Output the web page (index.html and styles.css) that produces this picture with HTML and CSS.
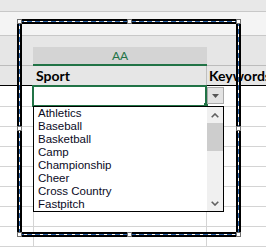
FILE: index.html
```html
<!DOCTYPE html>
<html lang="en">
  <head>
    <meta charset="UTF-8">
    <meta name="viewport" content="width=device-width, initial-scale=1.0">
    <title>Sport list</title>
    <link rel="stylesheet" href="styles.css">
  </head>
  <body>
    <div class="sheet">
      <div class="band-top"></div>
      <div class="band-bar"></div>
      <div class="col-heads">
        <div class="col-head">AA</div>
      </div>

      <div class="row row-field">
        <div class="cell cell-z"></div>
        <div class="cell cell-aa">Sport</div>
        <div class="cell cell-ab">Keywords</div>
      </div>
      <div class="row row-active">
        <div class="cell cell-z"></div>
        <div class="cell cell-aa"></div>
        <div class="cell cell-ab"></div>
      </div>
      <div class="row"><div class="cell cell-z"></div><div class="cell cell-aa"></div><div class="cell cell-ab"></div></div>
      <div class="row"><div class="cell cell-z"></div><div class="cell cell-aa"></div><div class="cell cell-ab"></div></div>
      <div class="row"><div class="cell cell-z"></div><div class="cell cell-aa"></div><div class="cell cell-ab"></div></div>
      <div class="row"><div class="cell cell-z"></div><div class="cell cell-aa"></div><div class="cell cell-ab"></div></div>
      <div class="row"><div class="cell cell-z"></div><div class="cell cell-aa"></div><div class="cell cell-ab"></div></div>
      <div class="row"><div class="cell cell-z"></div><div class="cell cell-aa"></div><div class="cell cell-ab"></div></div>
      <div class="row"><div class="cell cell-z"></div><div class="cell cell-aa"></div><div class="cell cell-ab"></div></div>

      <!-- selected cell + its dropdown -->
      <div class="selection"></div>
      <span class="fill-handle"></span>
      <button class="dd-button" type="button">
        <svg width="7" height="4" viewBox="0 0 7 4"><path d="M0 0h7L3.5 4z" fill="#555"/></svg>
      </button>
      <div class="dd-list">
        <ul class="dd-items">
          <li>Athletics</li>
          <li>Baseball</li>
          <li>Basketball</li>
          <li>Camp</li>
          <li>Championship</li>
          <li>Cheer</li>
          <li>Cross Country</li>
          <li>Fastpitch</li>
        </ul>
        <div class="dd-scroll">
          <span class="sc-arrow">
            <svg width="8" height="5" viewBox="0 0 8 5"><path d="M0.7 4.3 4 1l3.3 3.3" fill="none" stroke="#606060" stroke-width="1.6"/></svg>
          </span>
          <span class="sc-thumb"></span>
          <span class="sc-track"></span>
          <span class="sc-arrow">
            <svg width="8" height="5" viewBox="0 0 8 5"><path d="M0.7 0.7 4 4l3.3-3.3" fill="none" stroke="#606060" stroke-width="1.6"/></svg>
          </span>
        </div>
      </div>

      <!-- picture frame with its sizing handles -->
      <div class="frame"><div class="frame-mid"><div class="frame-in"></div></div></div>
      <span class="handle h-tl"></span>
      <span class="handle h-tc"></span>
      <span class="handle h-tr"></span>
      <span class="handle h-ml"></span>
      <span class="handle h-mr"></span>
      <span class="handle h-bl"></span>
      <span class="handle h-bc"></span>
      <span class="handle h-br"></span>
    </div>
  </body>
</html>
```

FILE: styles.css
```css
* {
    margin: 0;
    padding: 0;
    box-sizing: border-box;
}

body {
    background: #fff;
}

.sheet {
    position: relative;
    width: 266px;
    height: 248px;
    overflow: hidden;
    background: #fff;
    font-family: Lato, "Liberation Sans", sans-serif;
}

.band-top {
    height: 12px;
    background: #e8e8e8;
    border-bottom: 1px solid #c8c8c8;
}

.band-bar {
    height: 24px;
    background: #f4f4f4;
    border-bottom: 1px solid #c8c8c8;
}

.col-heads {
    height: 30px;
    display: flex;
    align-items: flex-end;
    background: #e6e6e6;
    border-bottom: 1px solid #bcbcbc;
}

.col-head {
    margin-left: 33px;
    margin-bottom: -1px;
    width: 174px;
    height: 19px;
    background: #d4d4d4;
    border-bottom: 2px solid #217346;
    color: #217346;
    font-size: 12px;
    line-height: 17px;
    text-align: center;
}

/* grid rows */
.row {
    display: flex;
    height: 20px;
    border-bottom: 1px solid #d4d4d4;
}

.cell-z {
    flex: none;
    width: 34px;
    border-right: 1px solid #d4d4d4;
}

.cell-aa {
    flex: none;
    width: 173px;
    border-right: 1px solid #d4d4d4;
}

.cell-ab {
    flex: 1;
    min-width: 0;
}

.row-field {
    background: #e6e6e6;
    border-bottom-color: #000;
    font-weight: 700;
    font-size: 14px;
    line-height: 19px;
    color: #000;
    white-space: nowrap;
}

.row-field .cell-z {
    border-right-color: #e6e6e6;
}

.row-field .cell-aa {
    padding-left: 2px;
    border-right-color: #bfbfbf;
}

.row-field .cell-ab {
    padding-left: 2px;
}

.row-active {
    height: 21px;
}

/* active cell */
.selection {
    position: absolute;
    left: 32px;
    top: 85px;
    width: 175px;
    height: 22px;
    border: 2px solid #217346;
}

.fill-handle {
    position: absolute;
    left: 204px;
    top: 103px;
    width: 4px;
    height: 4px;
    background: #217346;
}

.dd-button {
    position: absolute;
    left: 207px;
    top: 87px;
    width: 17px;
    height: 17px;
    border: 1px solid #a9a9a9;
    background: #e3e3e3;
    display: flex;
    align-items: center;
    justify-content: center;
}

.dd-list {
    position: absolute;
    left: 33px;
    top: 106px;
    width: 191px;
    height: 106px;
    border: 1px solid #000;
    background: #fff;
    display: flex;
}

.dd-items {
    flex: 1;
    list-style: none;
    font-family: "Liberation Sans", Arial, sans-serif;
    font-size: 11.5px;
    line-height: 13px;
    color: #0a0a1e;
}

.dd-items li {
    height: 13px;
    padding-left: 4px;
}

.dd-scroll {
    width: 16px;
    background: #f0f0f0;
    display: flex;
    flex-direction: column;
}

.sc-arrow {
    height: 16px;
    display: flex;
    align-items: center;
    justify-content: center;
}

.sc-thumb {
    height: 28px;
    background: #cdcdcd;
}

.sc-track {
    flex: 1;
}

/* marching-ants frame */
.frame {
    position: absolute;
    left: 17px;
    top: 19px;
    width: 224px;
    height: 218px;
    border: 2px solid #000;
}

.frame-mid {
    height: 100%;
    padding: 1px;
    background:
        repeating-linear-gradient(90deg, #2a62a8 0 5px, #fff 5px 8px) top / 100% 1px no-repeat,
        repeating-linear-gradient(90deg, #2a62a8 0 5px, #fff 5px 8px) bottom / 100% 1px no-repeat,
        repeating-linear-gradient(180deg, #2a62a8 0 5px, #fff 5px 8px) left / 1px 100% no-repeat,
        repeating-linear-gradient(180deg, #2a62a8 0 5px, #fff 5px 8px) right / 1px 100% no-repeat;
}

.frame-in {
    height: 100%;
    border: 2px solid #000;
}

.handle {
    position: absolute;
    width: 5px;
    height: 5px;
    background: #fff;
    border: 1px solid #707070;
}

.h-tl { left: 17px; top: 19px; }
.h-tc { left: 127px; top: 19px; }
.h-tr { left: 236px; top: 19px; }
.h-ml { left: 17px; top: 126px; }
.h-mr { left: 236px; top: 126px; }
.h-bl { left: 17px; top: 232px; }
.h-bc { left: 127px; top: 232px; }
.h-br { left: 236px; top: 232px; }
```
